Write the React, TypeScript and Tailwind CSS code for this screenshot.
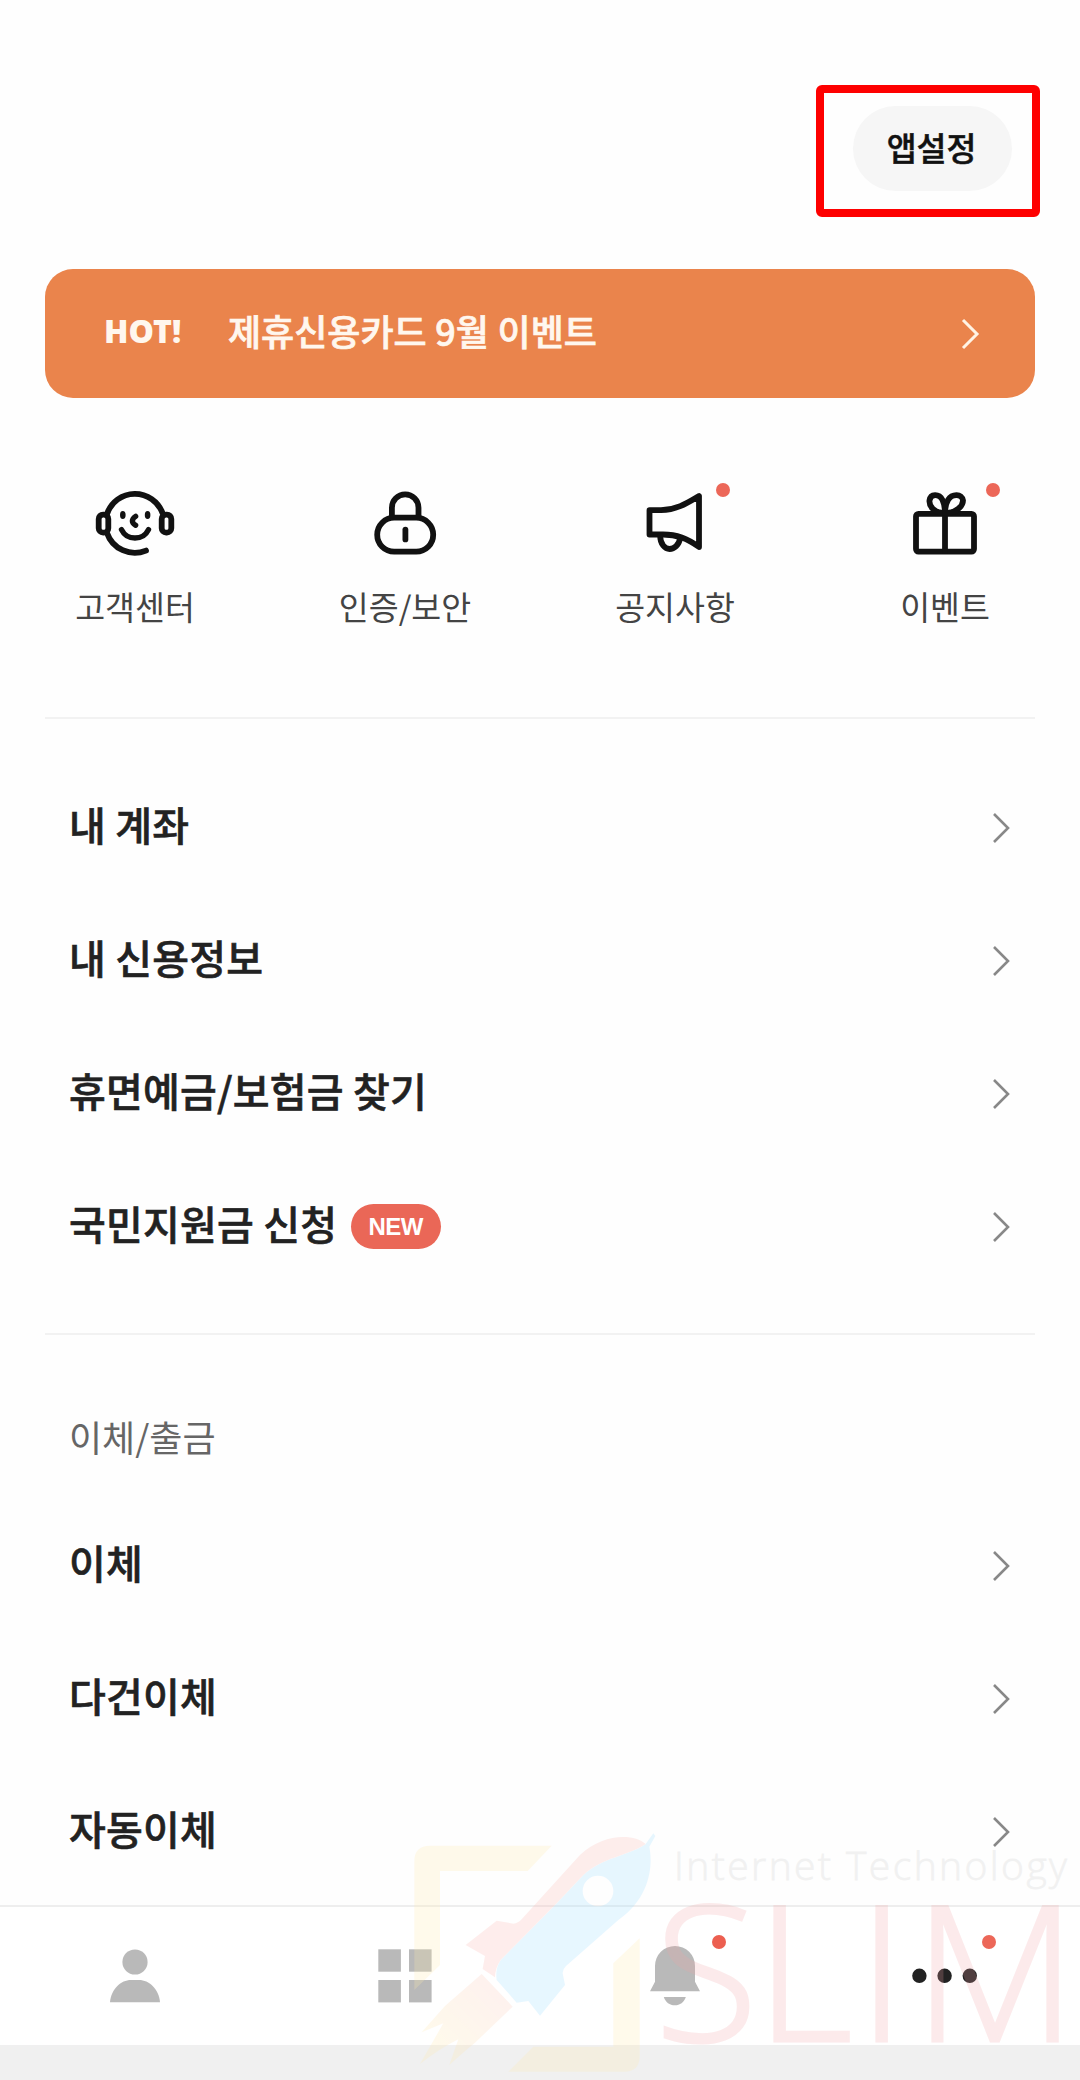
import type { ReactNode } from "react"

type MenuRow = { title: string; isNew?: boolean }

const mainMenu: MenuRow[] = [
  { title: "내 계좌" },
  { title: "내 신용정보" },
  { title: "휴면예금/보험금 찾기" },
  { title: "국민지원금 신청", isNew: true },
]

const transferMenu: MenuRow[] = [
  { title: "이체" },
  { title: "다건이체" },
  { title: "자동이체" },
]

function LineIcon({ children }: { children: ReactNode }) {
  return (
    <svg
      viewBox="0 0 80 80"
      className="h-20 w-20"
      fill="none"
      stroke="#111"
      strokeWidth="5.8"
      strokeLinecap="round"
      strokeLinejoin="round"
    >
      {children}
    </svg>
  )
}

function SupportIcon() {
  return (
    <LineIcon>
      <path d="M67.6 29.3A29.4 29.4 0 0 0 12 30M12 49A29.4 29.4 0 0 0 51 66.6" />
      <rect x="3.7" y="30.6" width="9.6" height="18" rx="4.4" />
      <rect x="66.7" y="30.6" width="9.6" height="18" rx="4.4" />
      <path d="M40.6 32.4q-6.4 4.6 0 8.8" strokeWidth="5.4" />
      <path d="M26.5 45.6a15 15 0 0 0 27 0" strokeWidth="5.4" />
      <ellipse cx="27.8" cy="31" rx="2.8" ry="3.9" fill="#111" stroke="none" />
      <ellipse cx="52.6" cy="31" rx="2.8" ry="3.9" fill="#111" stroke="none" />
    </LineIcon>
  )
}

function LockIcon() {
  return (
    <LineIcon>
      <path d="M26.9 33V23.7a13.3 13.3 0 0 1 26.6 0V33" />
      <rect x="12.2" y="33.7" width="56" height="34" rx="17" />
      <path d="M40.4 45.6v9.8" />
    </LineIcon>
  )
}

function NoticeIcon() {
  return (
    <LineIcon>
      <path d="M14.5 26.2H26C42 26 53 18.5 64 12V63C52 54.5 42 50.5 28 50.5H14.5Z" />
      <path d="M25.2 52C25.2 60 30 65 34.6 65S44 61 45.2 54" />
    </LineIcon>
  )
}

function GiftIcon() {
  return (
    <LineIcon>
      <rect x="11" y="29.8" width="58" height="37.8" rx="2.5" />
      <path d="M40 29V67" />
      <path d="M38.5 29C29 29 24 22 24.5 16.5C25.5 9.5 34 9.5 37.5 16C39.5 20 40 24 40 29" />
      <path d="M41.5 29C51 29 58 22 58 16.5C57 9.5 47 9.5 43 16C40.5 20 40 24 40 29" />
    </LineIcon>
  )
}

function Chevron({ light }: { light?: boolean }) {
  return (
    <svg viewBox="0 0 20 34" className="h-[34px] w-5" fill="none">
      <path
        d="M3 3L17 17L3 31"
        stroke={light ? "#fff3e4" : "#888"}
        strokeWidth={light ? 3 : 2.6}
      />
    </svg>
  )
}

function Shortcut({ label, icon, dot }: { label: string; icon: ReactNode; dot?: boolean }) {
  return (
    <a href="#" className="relative flex flex-col items-center">
      {icon}
      {dot && <span className="absolute top-[-1px] left-[176px] size-3.5 rounded-full bg-[#ec6758]" />}
      <span className="mt-[18px] mb-0.5 text-[32.5px] leading-12 text-[#444]">{label}</span>
    </a>
  )
}

function Row({ title, isNew }: MenuRow) {
  return (
    <li className="flex h-[133px] items-center pr-6 pl-6">
      <span className="pb-[7px] text-[40px] leading-15 font-medium tracking-[0.2px] text-[#222] [-webkit-text-stroke:0.6px_#222]">
        {title}
      </span>
      {isNew && (
        <span className="ml-3.5 flex h-[45px] w-[90px] items-center justify-center rounded-full bg-[#ea6757] pr-px font-['Liberation_Sans',sans-serif] text-2xl font-bold tracking-[-0.5px] text-white">
          NEW
        </span>
      )}
      <span className="ml-auto">
        <Chevron />
      </span>
    </li>
  )
}

function BottomNav() {
  return (
    <nav className="grid h-[140px] grid-cols-4 justify-items-center border-t-2 border-[#eee] bg-white pt-[29px]">
      <svg viewBox="0 0 80 80" className="h-20 w-20" fill="#b9b9b9">
        <circle cx="40" cy="26" r="12.6" />
        <path d="M15 66.3C16 53 26 44 36 44h8C54 44 64 53 65 66.3z" />
      </svg>
      <svg viewBox="0 0 80 80" className="h-20 w-20" fill="#b9b9b9">
        <rect x="13.3" y="13.3" width="22.6" height="22.4" />
        <rect x="44" y="13.3" width="22.6" height="22.4" />
        <rect x="13.3" y="44" width="22.6" height="22.4" />
        <rect x="44" y="44" width="22.6" height="22.4" />
      </svg>
      <svg viewBox="0 0 100 80" className="ml-5 h-20 w-[100px] overflow-visible" fill="#b9b9b9">
        <path d="M20 30a20 20 0 0 1 40 0V45.7L65 55.3H15L20 45.7Z" />
        <path d="M28.8 61H50.8C49 66.5 45 69.3 39.8 69.3S30.6 66.5 28.8 61Z" />
        <circle cx="84" cy="6" r="7" fill="#ec5f50" />
      </svg>
      <svg viewBox="0 0 100 80" className="ml-5 h-20 w-[100px] overflow-visible" fill="#222">
        <circle cx="14.4" cy="39.8" r="7.2" />
        <circle cx="39.6" cy="39.8" r="7.2" />
        <circle cx="64.8" cy="39.8" r="7.2" />
        <circle cx="84" cy="6" r="7" fill="#ec6758" />
      </svg>
    </nav>
  )
}

// Translucent blog logo stamped over the bottom right corner
function Watermark() {
  return (
    <svg
      viewBox="400 1820 680 260"
      className="pointer-events-none absolute right-0 bottom-0 h-[260px] w-[680px]"
    >
      <defs>
        <linearGradient id="flame" x1="1" y1="0" x2="0" y2="1">
          <stop offset="0.1" stopColor="#fbc6bd" />
          <stop offset="0.8" stopColor="#ffebaf" />
        </linearGradient>
      </defs>
      <g transform="translate(380 1800) scale(0.33333)" opacity="0.24">
        <g fill="#ffebaf">
          <path d="M515 137H150Q103 137 103 184V570L180 495V213H443Z" />
          <path d="M779 415V768Q779 815 732 815H385L460 740H700V490Z" />
        </g>
        <path
          d="M797 132L820 100L826 108L808 140C818 190 815 290 715 360L558 498Q545 510 549 525L555 555L480 647L445 603L410 608L350 540Q345 505 362 480L530 310L610 225C670 170 740 170 797 132ZM700 273A46 46 0 1 0 608 273A46 46 0 1 0 700 273Z"
          fill="#9fdfff"
          fillRule="evenodd"
        />
        <path
          d="M797 132C760 100 670 100 600 165L425 358Q415 370 400 371L350 362L257 435L315 468L308 507L345 532Q345 505 362 480L530 310L610 225C670 170 740 170 797 132Z"
          fill="#fbb8b2"
        />
        <path
          d="M305 522L398 620L285 728Q240 765 208 795L235 718Q180 745 120 792L190 670L125 697L195 618Z"
          fill="url(#flame)"
        />
      </g>
      <text
        x="674"
        y="1880"
        textLength="393"
        fontSize="39"
        fontWeight="300"
        fill="#777"
        stroke="#777"
        strokeWidth="0.8"
        opacity="0.09"
        fontFamily="Open Sans, sans-serif"
      >
        Internet Technology
      </text>
      <text
        x="655 756 858 914"
        y="2041"
        fontSize="188"
        fontWeight="300"
        fill="#f2a3a6"
        stroke="#f2a3a6"
        strokeWidth="3"
        opacity="0.22"
        fontFamily="Open Sans, sans-serif"
      >
        SLIM
      </text>
    </svg>
  )
}

export default function App() {
  return (
    <div className="relative flex h-[2080px] w-[1080px] flex-col overflow-hidden bg-[#fefefe] font-['Noto_Sans_CJK_KR',sans-serif]">
      <header className="flex justify-end pt-[85px] pr-10">
        <div className="flex h-[132px] w-56 rounded-md border-8 border-[#fe0000] pt-[13px] pl-[29px]">
          <button className="h-[85px] w-[159px] rounded-full bg-[#f6f6f6] pr-0.5 pb-[3px] text-[32.5px] font-medium text-[#111] [-webkit-text-stroke:0.5px_#111]">
            앱설정
          </button>
        </div>
      </header>

      <a
        href="#"
        className="mx-[45px] mt-[52px] flex h-[129px] shrink-0 items-center rounded-[28px] bg-[#ea844c] pr-[55px] pl-[59px] text-[#fff7ee]"
      >
        <span className="w-[124px] pb-1.5 font-['Noto_Sans',sans-serif] text-[32px] font-black">HOT!</span>
        <span className="pb-[7px] text-4xl font-medium [word-spacing:0.5px] [-webkit-text-stroke:0.7px_#fff7ee]">
          제휴신용카드 9월 이벤트
        </span>
        <span className="ml-auto">
          <Chevron light />
        </span>
      </a>

      <section className="mt-[86px] grid grid-cols-4">
        <Shortcut label="고객센터" icon={<SupportIcon />} />
        <Shortcut label="인증/보안" icon={<LockIcon />} />
        <Shortcut label="공지사항" icon={<NoticeIcon />} dot />
        <Shortcut label="이벤트" icon={<GiftIcon />} dot />
      </section>

      <ul className="mx-[45px] mt-[85px] border-t-2 border-[#f2f2f2] pt-[42px]">
        {mainMenu.map((row) => (
          <Row key={row.title} {...row} />
        ))}
      </ul>

      <section className="mx-[45px] mt-10 min-h-0 flex-1 overflow-hidden border-t-2 border-[#f2f2f2] pt-[74px]">
        <h2 className="pl-6 text-[36px] leading-[54px] text-[#666]">이체/출금</h2>
        <ul className="mt-9">
          {transferMenu.map((row) => (
            <Row key={row.title} {...row} />
          ))}
        </ul>
      </section>

      <BottomNav />
      <div className="h-[35px] shrink-0 bg-[#f0f0f0]" />
      <Watermark />
    </div>
  )
}
